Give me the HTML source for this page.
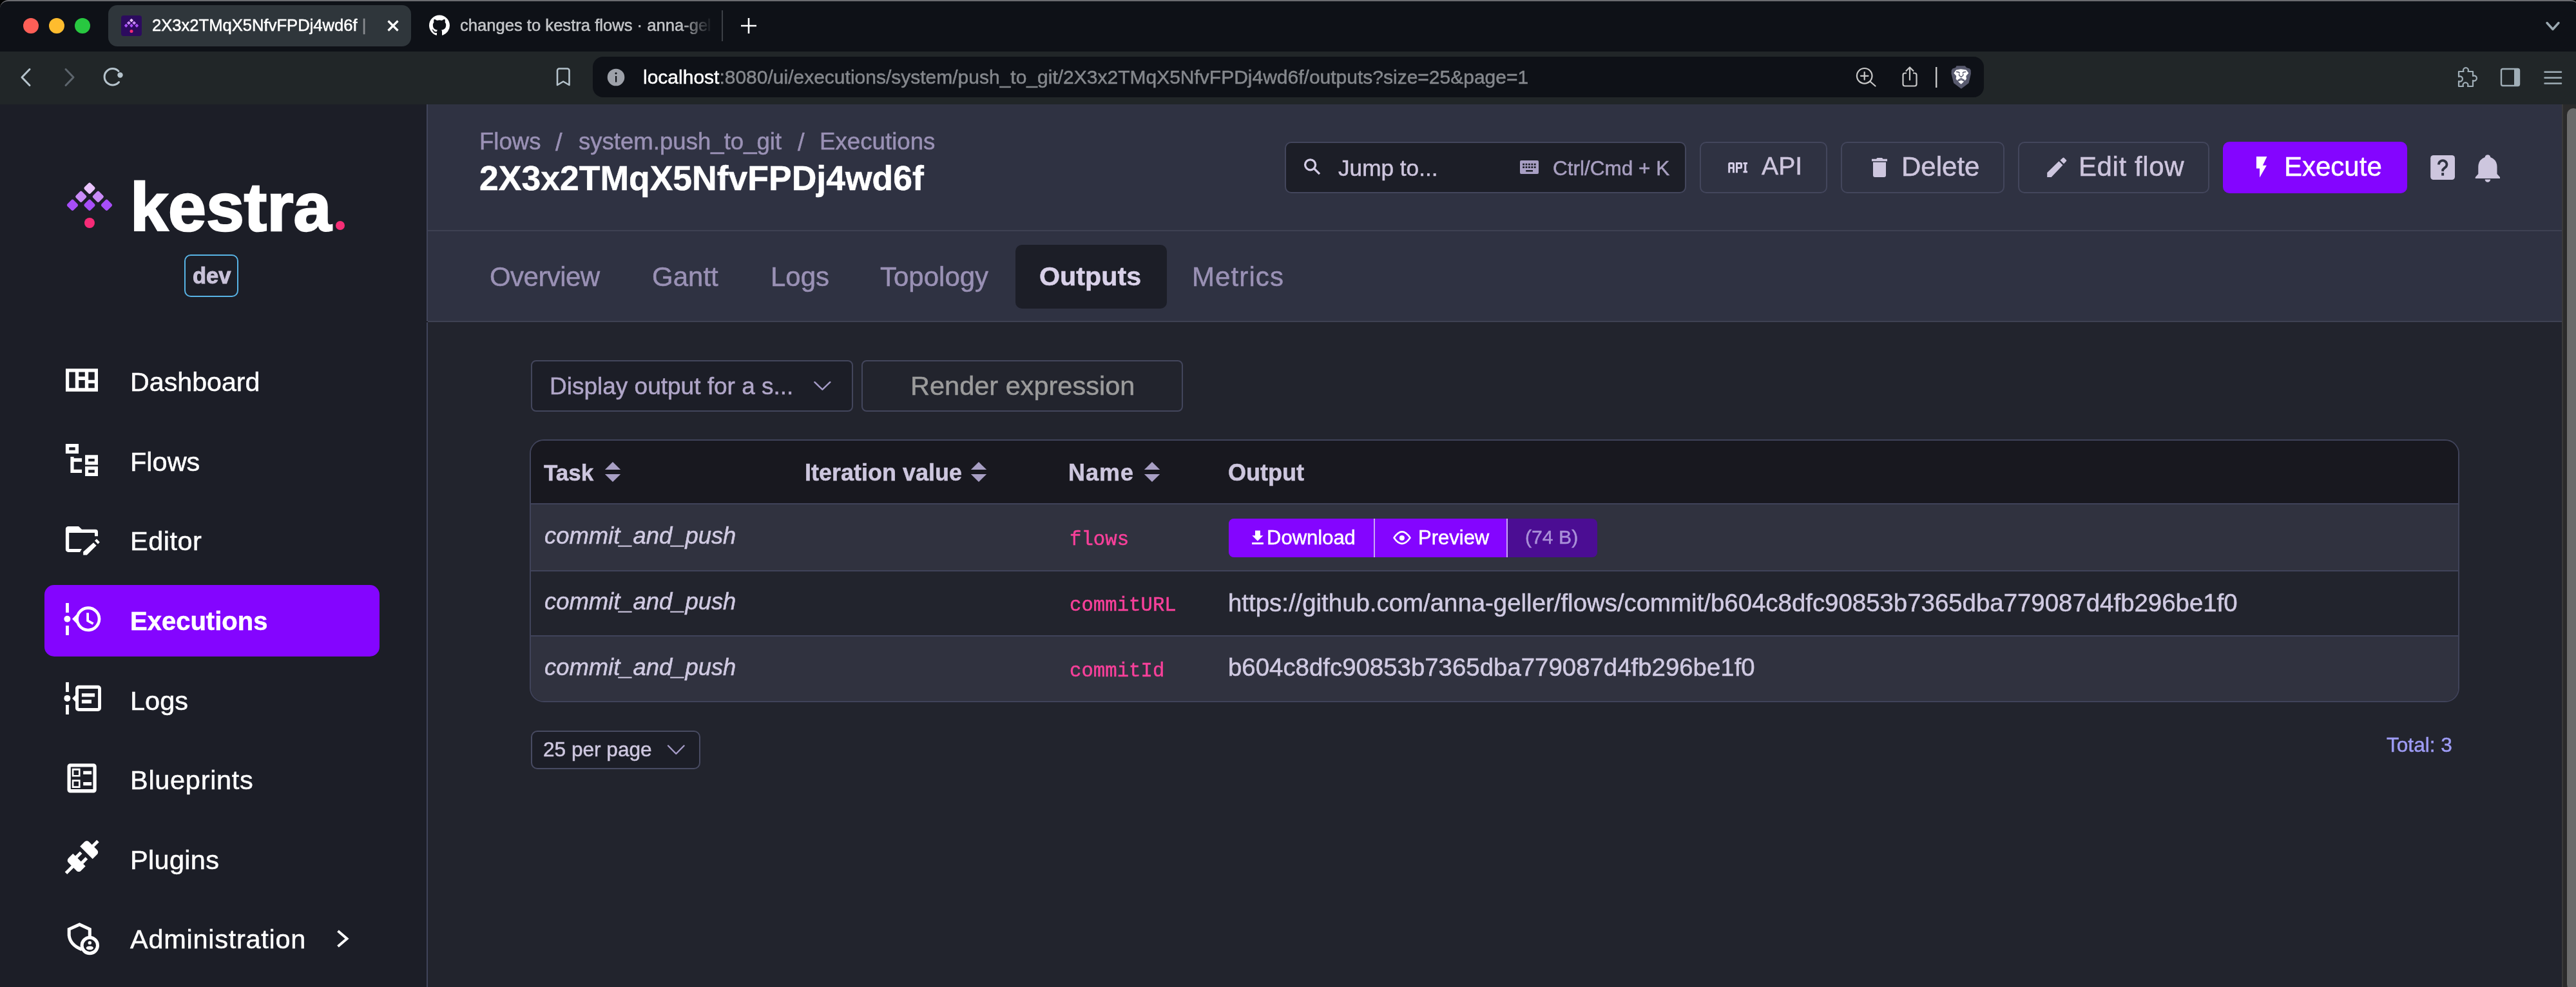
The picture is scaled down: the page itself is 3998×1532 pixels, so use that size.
<!DOCTYPE html>
<html><head><meta charset="utf-8">
<style>
*{margin:0;padding:0;box-sizing:border-box}
html,body{width:3998px;height:1532px;overflow:hidden;background:#000;font-family:"Liberation Sans",sans-serif}
.a{position:absolute}
.t{position:absolute;line-height:1;white-space:nowrap;will-change:transform}
.mono{font-family:"Liberation Mono",monospace}
.t{-webkit-text-stroke:0.5px currentColor}
svg{position:absolute;overflow:visible}
</style></head><body>
<!-- ===== Browser chrome ===== -->
<div class="a" id="tabbar" style="left:0;top:0;width:4003px;height:100px;background:#0e1117;border-top:2px solid #6b6c70;border-radius:13px 13px 0 0"></div>
<div class="a" style="left:36px;top:28px;width:24px;height:24px;border-radius:50%;background:#fe5f57"></div>
<div class="a" style="left:76px;top:28px;width:24px;height:24px;border-radius:50%;background:#febc2e"></div>
<div class="a" style="left:116px;top:28px;width:24px;height:24px;border-radius:50%;background:#28c840"></div>
<div class="a" id="acttab" style="left:168px;top:8px;width:470px;height:64px;background:#2f363b;border-radius:14px"></div>
<div class="a" style="left:188px;top:24px;width:32px;height:32px;background:#2c0b5e;border-radius:4px"></div>
<div class="t" style="left:236px;top:27px;font-size:25.6px;color:#fff">2X3x2TMqX5NfvFPDj4wd6f <span style="color:#8a8d91">|</span></div>
<div class="t" style="left:714px;top:27px;width:392px;overflow:hidden;font-size:25.6px;color:#c4c6c9;-webkit-mask-image:linear-gradient(to right,#000 340px,transparent 392px)">changes to kestra flows · anna-gel</div>

<div class="a" id="toolbar" style="left:0;top:80px;width:3998px;height:82px;background:#212628"></div>
<div class="a" id="urlbar" style="left:920px;top:88px;width:2159px;height:63px;background:#0e1117;border-radius:16px"></div>
<div class="t" style="left:998px;top:104.6px;font-size:30px;color:#fff">localhost<span style="color:#85888d">:8080/ui/executions/system/push_to_git/2X3x2TMqX5NfvFPDj4wd6f/outputs?size=25&amp;page=1</span></div>

<!-- ===== Sidebar ===== -->
<div class="a" id="sidebar" style="left:0;top:162px;width:662px;height:1370px;background:#1c1e27"></div>
<div class="t" style="left:202px;top:267.5px;font-size:106px;font-weight:700;color:#fff;letter-spacing:0px;-webkit-text-stroke:2.6px #fff">kestra</div>
<div class="a" style="left:521px;top:343px;width:14px;height:14px;border-radius:50%;background:#f62e76"></div>
<div class="a" id="dev" style="left:286px;top:395px;width:84px;height:66px;border:2.5px solid #58b4e6;border-radius:10px"></div>
<div class="t" style="left:298.5px;top:411px;font-size:34.5px;font-weight:700;color:#c9c2d9;-webkit-text-stroke:1px #c9c2d9">dev</div>

<div class="a" id="execbox" style="left:69px;top:908px;width:520px;height:111px;background:#8405ff;border-radius:15px"></div>
<div class="t" style="left:202px;top:572.8px;font-size:41.2px;color:#fff">Dashboard</div>
<div class="t" style="left:202px;top:696.4px;font-size:41.5px;color:#fff">Flows</div>
<div class="t" style="left:202px;top:819.4px;font-size:41.5px;letter-spacing:0.5px;color:#fff">Editor</div>
<div class="t" style="left:202px;top:944px;font-size:40px;font-weight:700;color:#fff">Executions</div>
<div class="t" style="left:202px;top:1066.6px;font-size:41.5px;color:#fff">Logs</div>
<div class="t" style="left:202px;top:1190px;font-size:41.5px;letter-spacing:0.7px;color:#fff">Blueprints</div>
<div class="t" style="left:202px;top:1314.2px;font-size:41.5px;letter-spacing:0.3px;color:#fff">Plugins</div>
<div class="t" style="left:202px;top:1437.3px;font-size:41.5px;letter-spacing:0.72px;color:#fff">Administration</div>

<!-- ===== Main ===== -->
<div class="a" id="header" style="left:662px;top:162px;width:3314px;height:337px;background:#2f3242;border-left:2px solid #40445a"></div>
<div class="a" style="left:664px;top:357px;width:3312px;height:2px;background:#3e4152"></div>
<div class="a" style="left:664px;top:498px;width:3312px;height:2px;background:#3e4152"></div>
<div class="a" id="content" style="left:662px;top:500px;width:3314px;height:1032px;background:#22242d;border-left:2px solid #40445a"></div>

<div class="t" style="left:744.4px;top:201.9px;font-size:36.6px;color:#9a91b5">Flows</div>
<div class="t" style="left:861.5px;top:201.9px;font-size:38px;color:#9a91b5">/</div>
<div class="t" style="left:897.7px;top:201.9px;font-size:36.6px;color:#9a91b5">system.push_to_git</div>
<div class="t" style="left:1237.5px;top:201.9px;font-size:38px;color:#9a91b5">/</div>
<div class="t" style="left:1272.3px;top:201.9px;font-size:36.7px;color:#9a91b5">Executions</div>
<div class="t" style="left:744px;top:249.7px;font-size:53.5px;font-weight:700;color:#fff">2X3x2TMqX5NfvFPDj4wd6f</div>

<!-- tabs -->
<div class="a" style="left:1576px;top:380px;width:235px;height:99px;background:#1c1e27;border-radius:10px"></div>
<div class="t" style="left:760px;top:409.4px;font-size:42px;letter-spacing:-0.55px;color:#9a91b5">Overview</div>
<div class="t" style="left:1012px;top:409.4px;font-size:42px;color:#9a91b5">Gantt</div>
<div class="t" style="left:1196px;top:409.4px;font-size:42px;color:#9a91b5">Logs</div>
<div class="t" style="left:1366px;top:409.4px;font-size:42px;color:#9a91b5">Topology</div>
<div class="t" style="left:1613px;top:409.4px;font-size:41.3px;font-weight:700;color:#d9d1e9">Outputs</div>
<div class="t" style="left:1850px;top:409.4px;font-size:42px;letter-spacing:1.1px;color:#9a91b5">Metrics</div>

<!-- header buttons -->
<div class="a" id="jump" style="left:1994px;top:220px;width:623px;height:80px;background:#1c1e27;border:2px solid #43465c;border-radius:10px"></div>
<div class="t" style="left:2077px;top:242.5px;font-size:35.2px;color:#cdc5dd">Jump to...</div>
<div class="t" style="left:2410px;top:245.5px;font-size:31.5px;color:#a89fc0">Ctrl/Cmd + K</div>
<div class="a" style="left:2638px;top:220px;width:198px;height:80px;border:2px solid #43465c;border-radius:10px"></div>
<div class="t" style="left:2734px;top:237.9px;font-size:39.2px;color:#cdc5dd">API</div>
<div class="a" style="left:2857px;top:220px;width:254px;height:80px;border:2px solid #43465c;border-radius:10px"></div>
<div class="t" style="left:2951px;top:238.4px;font-size:42px;color:#cdc5dd">Delete</div>
<div class="a" style="left:3132px;top:220px;width:297px;height:80px;border:2px solid #43465c;border-radius:10px"></div>
<div class="t" style="left:3226px;top:238.4px;font-size:42px;letter-spacing:0.6px;color:#cdc5dd">Edit flow</div>
<div class="a" style="left:3450px;top:220px;width:286px;height:80px;background:#8405ff;border-radius:10px"></div>
<div class="t" style="left:3545px;top:238.4px;font-size:42px;color:#fff">Execute</div>

<!-- filters -->
<div class="a" style="left:824px;top:559px;width:500px;height:80px;background:#1c1e27;border:2px solid #43465c;border-radius:8px"></div>
<div class="t" style="left:853px;top:580.7px;font-size:37px;color:#b0a6c8">Display output for a s...</div>
<div class="a" style="left:1337px;top:559px;width:499px;height:80px;border:2px solid #43465c;border-radius:8px"></div>
<div class="t" style="left:1413px;top:578.4px;font-size:41.5px;color:#9b9b9b">Render expression</div>

<!-- table -->
<div class="a" id="table" style="left:822px;top:682px;width:2995px;height:408px;border:2px solid #40435a;border-radius:22px;overflow:hidden;background:#22242d">
  <div class="a" style="left:0;top:0;width:100%;height:97px;background:#18181f"></div>
  <div class="a" style="left:0;top:97px;width:100%;height:2px;background:#40435a"></div>
  <div class="a" style="left:0;top:99px;width:100%;height:102px;background:#30323f"></div>
  <div class="a" style="left:0;top:201px;width:100%;height:2px;background:#40435a"></div>
  <div class="a" style="left:0;top:302px;width:100%;height:2px;background:#40435a"></div>
  <div class="a" style="left:0;top:304px;width:100%;height:110px;background:#30323f"></div>
</div>
<div class="t" style="left:844px;top:716.4px;font-size:35px;font-weight:700;color:#cdc6de">Task</div>
<div class="t" style="left:1249px;top:715.5px;font-size:36px;font-weight:700;color:#cdc6de">Iteration value</div>
<div class="t" style="left:1658px;top:715.5px;font-size:36px;font-weight:700;letter-spacing:1px;color:#cdc6de">Name</div>
<div class="t" style="left:1906px;top:715.5px;font-size:36px;font-weight:700;color:#cdc6de">Output</div>

<div class="t" style="left:845px;top:813.7px;font-size:36.4px;font-style:italic;color:#d0cae2">commit_and_push</div>
<div class="t" style="left:845px;top:916.2px;font-size:36.4px;font-style:italic;color:#d0cae2">commit_and_push</div>
<div class="t" style="left:845px;top:1017.8px;font-size:36.4px;font-style:italic;color:#d0cae2">commit_and_push</div>
<div class="t mono" style="left:1660px;top:822.5px;font-size:30.7px;color:#f7409a">flows</div>
<div class="t mono" style="left:1660px;top:925px;font-size:30.7px;color:#f7409a">commitURL</div>
<div class="t mono" style="left:1660px;top:1026.5px;font-size:30.7px;color:#f7409a">commitId</div>

<div class="a" style="left:1907px;top:805px;width:572px;height:60px;background:#4b0d93;border-radius:8px;overflow:hidden">
  <div class="a" style="left:0;top:0;width:432px;height:60px;background:#8405ff"></div>
  <div class="a" style="left:225px;top:0;width:2px;height:60px;background:#c9a6f5"></div>
  <div class="a" style="left:431px;top:0;width:2px;height:60px;background:#c9a6f5"></div>
</div>
<div class="t" style="left:1966px;top:818.7px;font-size:31px;color:#fff">Download</div>
<div class="t" style="left:2201px;top:818.7px;font-size:31px;color:#fff">Preview</div>
<div class="t" style="left:2367px;top:819px;font-size:30.2px;color:#a98fd8">(74 B)</div>

<div class="t" style="left:1906px;top:916.5px;font-size:38.4px;color:#d0cae2">https://github.com/anna-geller/flows/commit/b604c8dfc90853b7365dba779087d4fb296be1f0</div>
<div class="t" style="left:1906px;top:1017px;font-size:38.4px;color:#d0cae2">b604c8dfc90853b7365dba779087d4fb296be1f0</div>

<!-- pagination -->
<div class="a" style="left:824px;top:1134px;width:263px;height:60px;background:#1c1e27;border:2px solid #484b62;border-radius:10px"></div>
<div class="t" style="left:843px;top:1147.5px;font-size:31.6px;color:#cfc8e0">25 per page</div>
<div class="t" style="left:3703.5px;top:1141px;font-size:31.6px;color:#9e9cf5">Total: 3</div>

<!-- scrollbar -->
<div class="a" style="left:3976px;top:162px;width:22px;height:1370px;background:#2b2b2b;border-left:2px solid #3a3a3a"></div>
<div class="a" style="left:3984px;top:168px;width:20px;height:1370px;background:#6b6b6b;border-radius:10px"></div>

<!-- ===== Icons overlay ===== -->
<svg width="3998" height="1532" style="left:0;top:0;position:absolute">
<defs>
 <g id="klogo">
  <rect x="-6.8" y="-6.8" width="13.6" height="13.6" rx="2.6" transform="translate(0,0) rotate(45)" fill="#e9c3fc"/>
  <rect x="-6.8" y="-6.8" width="13.6" height="13.6" rx="2.6" transform="translate(-13.3,13.05) rotate(45)" fill="#c98af8"/>
  <rect x="-6.8" y="-6.8" width="13.6" height="13.6" rx="2.6" transform="translate(13.3,13.05) rotate(45)" fill="#c98af8"/>
  <rect x="-6.8" y="-6.8" width="13.6" height="13.6" rx="2.6" transform="translate(-26.5,26.1) rotate(45)" fill="#a74ef8"/>
  <rect x="-6.8" y="-6.8" width="13.6" height="13.6" rx="2.6" transform="translate(0,26.1) rotate(45)" fill="#a74ef8"/>
  <rect x="-6.8" y="-6.8" width="13.6" height="13.6" rx="2.6" transform="translate(26.5,26.1) rotate(45)" fill="#a74ef8"/>
  <circle cx="0" cy="53.8" r="8" fill="#f62b77"/>
 </g>
</defs>
<!-- favicon -->
<use href="#klogo" transform="translate(204,31.6) scale(0.313)"/>
<!-- big logo -->
<use href="#klogo" transform="translate(139,292.2)"/>
<!-- tab close X -->
<path d="M602.5 32.5 L617.5 47.5 M617.5 32.5 L602.5 47.5" stroke="#fff" stroke-width="3.2" stroke-linecap="butt"/>
<!-- github -->
<path transform="translate(666,23.5) scale(2)" fill="#fff" d="M8 0C3.58 0 0 3.58 0 8c0 3.54 2.29 6.53 5.47 7.59.4.07.55-.17.55-.38 0-.19-.01-.82-.01-1.49-2.01.37-2.53-.49-2.69-.94-.09-.23-.48-.94-.82-1.13-.28-.15-.68-.52-.01-.53.63-.01 1.08.58 1.23.82.72 1.21 1.87.87 2.33.66.07-.52.28-.87.51-1.06-1.78-.2-3.64-.89-3.64-3.95 0-.87.31-1.59.82-2.15-.08-.2-.36-1.02.08-2.12 0 0 .67-.21 2.2.82.64-.18 1.32-.27 2-.27.68 0 1.36.09 2 .27 1.53-1.04 2.2-.82 2.2-.82.44 1.1.16 1.92.08 2.12.51.56.82 1.27.82 2.15 0 3.07-1.87 3.75-3.65 3.95.29.25.54.73.54 1.48 0 1.07-.01 1.93-.01 2.2 0 .21.15.46.55.38A8.013 8.013 0 0016 8c0-4.42-3.58-8-8-8z"/>
<!-- tab separator & plus -->
<rect x="1120" y="16" width="2" height="48" fill="#3c4046"/>
<path d="M1162 28 V52 M1150 40 H1174" stroke="#fff" stroke-width="2.6"/>
<!-- tab list chevron -->
<path d="M3953 35.5 L3962 45.5 L3971 35.5" stroke="#9aa8b0" stroke-width="3.4" fill="none" stroke-linecap="round" stroke-linejoin="round"/>
<!-- back / forward / reload -->
<path d="M46 107.5 L34 120 L46 132.5" stroke="#b5c3cc" stroke-width="3" fill="none" stroke-linecap="round" stroke-linejoin="round"/>
<path d="M102 107.5 L114 120 L102 132.5" stroke="#5d656d" stroke-width="3" fill="none" stroke-linecap="round" stroke-linejoin="round"/>
<path d="M184.5 127.5 A12.7 12.7 0 1 1 184 110.5" stroke="#b5c3cc" stroke-width="3" fill="none" stroke-linecap="round"/>
<circle cx="186.5" cy="116.5" r="4.2" fill="#b5c3cc"/>
<!-- bookmark -->
<path d="M868 106.5 H880 A3 3 0 0 1 883.5 109.5 V132 L874.2 126.5 L865 132 V109.5 A3 3 0 0 1 868 106.5 Z" stroke="#b5c3cc" stroke-width="2.6" fill="none" stroke-linejoin="round"/>
<!-- info -->
<circle cx="956" cy="120" r="13.3" fill="#9da1a9"/>
<circle cx="956" cy="113.8" r="1.6" fill="#0e1117"/>
<rect x="955" y="118" width="2.2" height="9.5" fill="#0e1117"/>
<!-- zoom -->
<circle cx="2893.7" cy="117.8" r="11.8" stroke="#c8c8c8" stroke-width="2.2" fill="none"/>
<path d="M2902.5 126.5 L2910.5 133.5 M2888 117.8 H2899.5 M2893.7 112 V123.6" stroke="#c8c8c8" stroke-width="2.2" stroke-linecap="round"/>
<!-- share -->
<path d="M2959 113.5 H2956.5 A3 3 0 0 0 2953.5 116.5 V130.5 A3 3 0 0 0 2956.5 133.5 H2971.5 A3 3 0 0 0 2974.5 130.5 V116.5 A3 3 0 0 0 2971.5 113.5 H2969" stroke="#c8c8c8" stroke-width="2.2" fill="none"/>
<path d="M2964 124 V104.5 M2958.5 110 L2964 104.5 L2969.5 110" stroke="#c8c8c8" stroke-width="2.2" fill="none" stroke-linecap="round" stroke-linejoin="round"/>
<rect x="3004" y="104" width="2.4" height="32" fill="#c8c8c8"/>
<!-- brave -->
<path d="M3036.5 102.3 H3049.7 L3052.1 105 L3057 106.5 L3058.7 108.9 L3058.9 114.5 L3055.5 129.1 L3043.8 137.8 L3032.2 129.1 L3028.5 114.5 L3028.8 108.9 L3030.5 106.5 L3035.1 105 Z" fill="#585a6e"/>
<path d="M3036 108.4 L3043.3 107.2 L3051.6 108.4 L3055.3 113.5 L3051.3 118 L3052 122.5 L3049.5 125.3 L3043.8 123 L3038.1 125.3 L3035.6 122.5 L3036.3 118 L3032.3 113.5 Z M3039 126.4 L3043.8 124.5 L3048.2 126.4 L3043.6 130.8 Z" fill="#fff"/>
<path d="M3036 111.6 Q3040 111.3 3041.6 113.5 M3051.4 111.6 Q3047.4 111.3 3045.8 113.5 M3040.6 114.5 V117 L3043.7 119.6 L3046.8 117 V114.5 M3038.4 124.6 L3043.7 121.8 L3049 124.6" stroke="#585a6e" stroke-width="1.4" fill="none"/>
<!-- puzzle -->
<path d="M3816 111 H3823.5 A4 4 0 1 1 3830.5 111 H3838 V118 A4 4 0 1 1 3838 125 V134 H3830 A4 4 0 1 0 3823 134 H3816 V126 A4 4 0 1 0 3816 119 Z" stroke="#a0aeb7" stroke-width="2.2" fill="none" stroke-linejoin="round"/>
<!-- sidebar toggle -->
<rect x="3882" y="107" width="28" height="26" rx="2.5" stroke="#a0aeb7" stroke-width="2.4" fill="none"/>
<rect x="3902" y="107" width="8" height="26" fill="#a0aeb7"/>
<!-- menu -->
<path d="M3949.5 111.8 H3975 M3949.5 120.7 H3975 M3949.5 129.6 H3975" stroke="#a0aeb7" stroke-width="2.5" stroke-linecap="round"/>

<!-- ===== Kestra header icons ===== -->
<circle cx="2033.6" cy="255.8" r="8" stroke="#d4cde6" stroke-width="3.3" fill="none"/>
<path d="M2039.5 261.7 L2048 270.2" stroke="#d4cde6" stroke-width="3.3"/>
<path fill="#a89fc4" fill-rule="evenodd" d="M2361 249 H2386 A2 2 0 0 1 2388 251 V268 A2 2 0 0 1 2386 270 H2361 A2 2 0 0 1 2359 268 V251 A2 2 0 0 1 2361 249 Z
 M2363.2 253.8 h2.8 v2.8 h-2.8 Z M2367.6 253.8 h2.8 v2.8 h-2.8 Z M2372 253.8 h2.8 v2.8 h-2.8 Z M2376.4 253.8 h2.8 v2.8 h-2.8 Z M2380.8 253.8 h2.8 v2.8 h-2.8 Z
 M2363.2 258.3 h2.8 v2.8 h-2.8 Z M2367.6 258.3 h2.8 v2.8 h-2.8 Z M2372 258.3 h2.8 v2.8 h-2.8 Z M2376.4 258.3 h2.8 v2.8 h-2.8 Z M2380.8 258.3 h2.8 v2.8 h-2.8 Z
 M2368.2 264 h10.8 v2.6 h-10.8 Z"/>
<!-- API glyph -->
<path fill="#d4cde6" fill-rule="evenodd" d="M2682.2 268.2 V254.5 Q2682.2 252 2684.7 252 H2689.5 Q2692 252 2692 254.5 V268.2 H2689 V262 H2685.2 V268.2 Z M2685.2 255 V259.2 H2689 V255 Z
 M2694 268.2 V252 H2701.5 Q2704 252 2704 254.5 V259.5 Q2704 262 2701.5 262 H2697 V268.2 Z M2697 255 V259.2 H2701 V255 Z
 M2705.5 252 H2712 V255 H2710.3 V265.2 H2712 V268.2 H2705.5 V265.2 H2707.2 V255 H2705.5 Z"/>
<!-- trash -->
<path fill="#cdc6de" d="M2905 246.7 H2912 L2913.5 245 H2921 L2922.5 246.7 H2929 V250.2 H2905 Z M2907 251.7 H2927 V272 A3 3 0 0 1 2924 275 H2910 A3 3 0 0 1 2907 272 Z"/>
<!-- pencil -->
<path fill="#cdc6de" d="M3177.2 268 L3195.4 250.2 L3201.5 256.3 L3183.7 275 H3177.2 Z M3197.4 248.7 L3201.5 244.9 Q3202.5 244 3203.5 244.9 L3206.8 248.2 Q3207.7 249.2 3206.8 250.2 L3203 254.2 Z"/>
<!-- lightning -->
<path fill="#fff" d="M3501.9 243.1 H3518.4 L3511.8 256.8 H3517.8 L3507 275.5 V261.6 H3501.9 Z"/>
<!-- help -->
<rect x="3772.2" y="240.9" width="37.8" height="38.1" rx="4.5" fill="#cdc6de"/>
<path d="M3785 255.5 A6.2 6.2 0 1 1 3796.5 258.5 Q3793.5 261 3791.2 263.5 V266" stroke="#2f3241" stroke-width="3.8" fill="none"/>
<rect x="3789.2" y="268.2" width="3.9" height="4.4" fill="#2f3241"/>
<!-- bell -->
<path fill="#cdc6de" d="M3856.7 244 A4.3 4.3 0 0 1 3865.2 244 Q3875.5 248 3875.5 259 V270 L3880 275 V277 H3841.8 V275 L3846.3 270 V259 Q3846.3 248 3856.7 244 Z M3856.7 278.6 H3865.2 A4.25 4.25 0 0 1 3856.7 278.6 Z"/>

<!-- ===== Sidebar icons ===== -->
<path fill="#fff" fill-rule="evenodd" d="M102 572.2 H152 V607.7 H102 Z M107.2 577.6 V602.2 H116.8 V577.6 Z M122.2 577.6 V584.6 H131.8 V577.6 Z M122.2 590.1 V602.2 H131.8 V590.1 Z M137.2 577.6 V589.7 H146.8 V577.6 Z M137.2 595.1 V602.2 H146.8 V595.1 Z"/>
<path fill="#fff" fill-rule="evenodd" d="M101.9 688.9 H122 V704 H101.9 Z M107.2 694.2 V698.8 H116.7 V694.2 Z
 M109.4 709 H114.6 V711.3 H127.1 V716.7 H114.6 V728.7 H127.1 V734 H109.4 Z
 M132.1 706.3 H152 V721.6 H132.1 Z M137.1 711.9 V716.2 H146.8 V711.9 Z
 M132.1 724 H152 V738.9 H132.1 Z M137.1 729.2 V733.7 H146.8 V729.2 Z"/>
<path fill="#fff" fill-rule="evenodd" d="M106.5 816.9 H122 L127 821.8 H148 A4 4 0 0 1 152 825.8 V832.3 H147 V827 H107.2 V851.9 H127 L124 857 H106 A4 4 0 0 1 101.9 853 V821 A4.2 4.2 0 0 1 106.5 816.9 Z"/>
<path fill="#fff" d="M129.2 856.4 L145 842.2 L149.7 846.8 L134.8 861.6 H129.2 Z M147 839.2 L150 836.6 L154.8 841.4 L152 844.5 Z"/>
<!-- executions -->
<rect x="102.1" y="936" width="4.8" height="14.9" fill="#fff"/>
<rect x="102.1" y="971.1" width="4.8" height="14.8" fill="#fff"/>
<circle cx="104.4" cy="960.8" r="5" fill="#fff"/>
<path fill="#fff" fill-rule="evenodd" d="M112 960.8 L118.6 954 A19.5 19.5 0 1 1 118.6 967.6 Z M136.8 945.9 A14.9 14.9 0 1 0 136.8 975.7 A14.9 14.9 0 1 0 136.8 945.9 Z"/>
<path d="M136.1 951.2 V963.5 L144.6 968.2" stroke="#fff" stroke-width="3.8" fill="none"/>
<!-- logs -->
<rect x="102.1" y="1058.9" width="4.8" height="15.2" fill="#fff"/>
<rect x="102.1" y="1094" width="4.8" height="15" fill="#fff"/>
<circle cx="104.4" cy="1083.9" r="5" fill="#fff"/>
<path fill="#fff" fill-rule="evenodd" d="M122 1063.8 H152 A5 5 0 0 1 157 1068.8 V1098.9 A5 5 0 0 1 152 1103.9 H122 A5 5 0 0 1 117 1098.9 V1089 L112 1083.9 L117 1079 V1068.8 A5 5 0 0 1 122 1063.8 Z M122 1069.1 V1098.9 H152.1 V1069.1 Z"/>
<rect x="126.9" y="1076.2" width="20.2" height="5.4" fill="#fff"/>
<rect x="126.9" y="1086.2" width="15.1" height="5.6" fill="#fff"/>
<!-- blueprints -->
<path fill="#fff" fill-rule="evenodd" d="M109 1185.2 H145.2 A4.5 4.5 0 0 1 149.7 1189.7 V1226.1 A4.5 4.5 0 0 1 145.2 1230.6 H109 A4.5 4.5 0 0 1 104.5 1226.1 V1189.7 A4.5 4.5 0 0 1 109 1185.2 Z M109.8 1190.5 V1225 H144.4 V1190.5 Z
 M111.8 1192.8 H124.6 V1205.6 H111.8 Z M114.4 1195.7 V1203 H122 V1195.7 Z
 M111.8 1210.2 H124.6 V1223 H111.8 Z M114.4 1213.1 V1220.2 H122 V1213.1 Z
 M129.2 1196.7 H142.1 V1202 H129.2 Z M129.2 1213.9 H142.1 V1219.3 H129.2 Z"/>
<!-- plugins (mdi connection) -->
<path fill="#fff" transform="translate(97.2,1300.6) scale(2.5)" d="M21.4 7.5C22.2 8.3 22.2 9.6 21.4 10.3L18.6 13.1L10.8 5.3L13.6 2.5C14.4 1.7 15.7 1.7 16.4 2.5L18.2 4.3L21.2 1.3L22.6 2.7L19.6 5.7L21.4 7.5M15.6 13.3L14.2 11.9L11.4 14.7L9.3 12.6L12.1 9.8L10.7 8.4L7.9 11.2L6.4 9.8L3.6 12.6C2.8 13.4 2.8 14.7 3.6 15.4L5.4 17.2L1.4 21.2L2.8 22.6L6.8 18.6L8.6 20.4C9.4 21.2 10.7 21.2 11.4 20.4L14.2 17.6L12.8 16.2L15.6 13.3Z"/>
<!-- administration -->
<path d="M127 1473.8 Q109 1467 107.2 1452 V1442.3 L123.4 1435 L139.3 1442.3 V1453" stroke="#fff" stroke-width="5" fill="none" stroke-linejoin="miter"/>
<circle cx="139.3" cy="1467.5" r="12.2" stroke="#fff" stroke-width="5" fill="none"/>
<circle cx="139.3" cy="1463.4" r="2.7" fill="#fff"/>
<ellipse cx="139.3" cy="1471.4" rx="5.6" ry="2.9" fill="#fff"/>
<path d="M524.5 1445 L538.5 1457 L524.5 1469" stroke="#fff" stroke-width="4" fill="none"/>

<!-- ===== Content icons ===== -->
<path d="M1264.4 593.2 L1276.4 604.7 L1288.3 593.2" stroke="#a69cc8" stroke-width="2.4" fill="none" stroke-linecap="round" stroke-linejoin="round"/>
<path d="M1037 1157.5 L1049.3 1170 L1061.6 1157.5" stroke="#a69cc8" stroke-width="2.4" fill="none" stroke-linecap="round" stroke-linejoin="round"/>
<g fill="#a89fc4">
 <path d="M951 717 L963.2 729 H938.9 Z M938.9 735.9 H963.2 L951 747.9 Z"/>
 <path transform="translate(568,0)" d="M951 717 L963.2 729 H938.9 Z M938.9 735.9 H963.2 L951 747.9 Z"/>
 <path transform="translate(837,0)" d="M951 717 L963.2 729 H938.9 Z M938.9 735.9 H963.2 L951 747.9 Z"/>
</g>
<path fill="#fff" d="M1948 823.5 H1955.9 V831.2 H1960.5 L1951.9 839.7 L1943.3 831.2 H1948 Z M1943.1 842.1 H1960.9 V845 H1943.1 Z"/>
<path d="M2163.5 834.7 Q2176 816 2188.5 834.7 Q2176 853 2163.5 834.7 Z" stroke="#fff" stroke-width="2.6" fill="none" stroke-linejoin="round"/>
<circle cx="2175.9" cy="834.9" r="4" fill="#fff"/>
</svg>
</body></html>
